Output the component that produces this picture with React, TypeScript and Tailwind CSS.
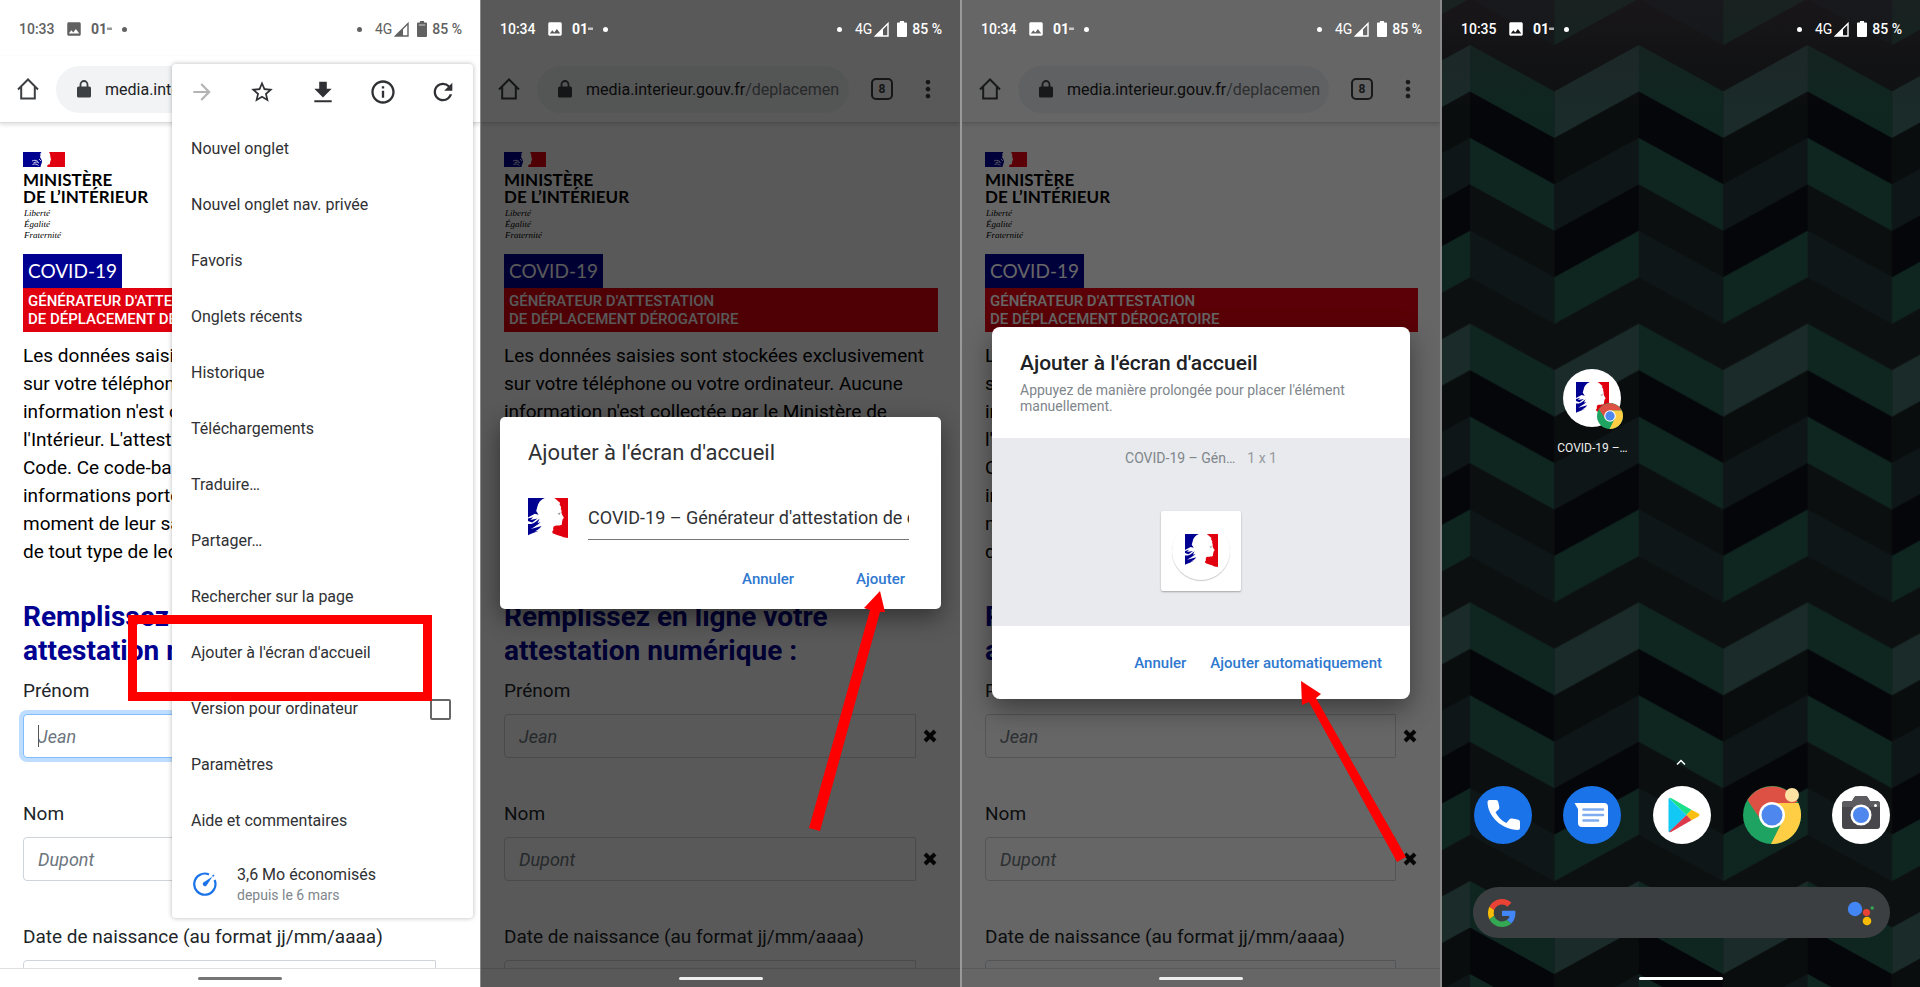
import { useId, type ReactNode } from "react";
import { MdArrowForward, MdImage, MdInfoOutline, MdMoreVert, MdRefresh, MdStarBorder } from "react-icons/md";

/* ---------- shared drawings ---------- */

function Marianne({ className }: { className: string }) {
  return (
    <svg viewBox="0 0 117 117" className={className} aria-hidden="true">
      <g fill="#000091">
        <path d="M0 0H49C37 5 29 14 27 27L24 38L31 49L20 46L0 57Z" />
        <path d="M0 60L15 56L7 64L28 60L12 72L0 67Z" />
        <path d="M0 76L10 76C20 74 26 66 34 61L28 73L37 71C28 79 16 86 8 91L40 82C33 92 26 94 20 98L31 96C20 102 10 104 0 109Z" />
      </g>
      <path
        fill="#e1000f"
        d="M77 0H117V117L104 115C96 111 84 108 72 103L71 97C77 94 72 90 74 86C76 78 90 82 97 79C101 77 98 72 100 69L101 63L105 58C103 52 97 47 98 41C100 36 94 33 97 27L92 18L94 14C88 10 84 4 77 0Z"
      />
      <path d="M86 46L95 42L93 50Z" fill="#9a9aa5" />
    </svg>
  );
}

function MinistryFlag() {
  return (
    <svg viewBox="0 0 42 15" className="h-[15px] w-[42px]" aria-hidden="true">
      <path d="M0 0H18.500C17.500 1 17 2 17.500 3.500L17 5C18 7 19 8 19 9.500C19 11 18 12 17.500 15H0Z" fill="#000091" />
      <path d="M26 0H42V15H24.500C24 14 24 13 25.500 12.500C28 12.500 26.500 10 27.500 9L28 7C27 5.500 27.500 3.500 27 2Z" fill="#e1000f" />
      <path
        d="M9 9C11 8 13 8 15 9.500M10.500 11C12.500 9.500 14.500 10 16 11M9.500 12.500C12 11.500 14 12 15.500 13.500M16 7L18 9"
        stroke="#fff"
        strokeWidth="0.8"
        fill="none"
      />
    </svg>
  );
}

function ChromeLogo({ className }: { className: string }) {
  return (
    <svg viewBox="0 0 58 58" className={className} aria-hidden="true">
      <circle cx="29" cy="29" r="29" fill="#1ea362" />
      <path d="M29 29L4.500 14A29 29 0 0 1 54.500 15.500L52 17H29Z" fill="#dd5144" />
      <path d="M29 29V17H55.400A29 29 0 0 1 28 58L39.500 35Z" fill="#ffce44" />
      <path d="M4.500 14L18.500 35L29 29V17Z" fill="#dd5144" />
      <circle cx="29" cy="29" r="13" fill="#fff" />
      <circle cx="29" cy="29" r="10.500" fill="#4e87ee" />
    </svg>
  );
}

function Arrow({ points }: { points: string }) {
  return (
    <svg viewBox="0 0 480 987" width="480" height="987" className="pointer-events-none absolute top-0 left-0 z-40" aria-hidden="true">
      <polygon points={points} fill="#fe0000" />
    </svg>
  );
}

/* ---------- phone chrome ---------- */

function StatusBar({ time, tone }: { time: string; tone: string }) {
  return (
    <header className={`relative z-20 flex h-14 shrink-0 items-center pt-0.5 pr-[18px] pl-[19px] text-[14px] font-medium ${tone}`}>
      <time className="w-[46px]">{time}</time>
      <MdImage size={18} />
      <span className="ml-2 flex w-[31px] items-center font-bold">
        01
        <svg viewBox="0 0 5 4" className="h-1 w-[5px]" aria-hidden="true">
          <path d="M0 0.500H5V3H0Z" fill="currentColor" opacity="0.65" />
        </svg>
      </span>
      <i className="size-[5px] rounded-full bg-current" />
      <i className="ml-auto size-[5px] rounded-full bg-current" />
      <span className="ml-[13px] font-normal">4G</span>
      <svg viewBox="0 0 15 15" className="ml-0.5 size-[15px]" aria-hidden="true">
        <path d="M14 1.500V14H1.500Z" fill="none" stroke="currentColor" strokeWidth="1.400" />
        <path d="M9 6.500V14H1Z" fill="currentColor" />
      </svg>
      <svg viewBox="0 0 10 16" className="ml-2 h-4 w-2.5" aria-hidden="true">
        <path d="M3 0H7V1.500H9Q10 1.500 10 2.500V15Q10 16 9 16H1Q0 16 0 15V2.500Q0 1.500 1 1.500H3Z" fill="currentColor" />
        <path d="M1.800 4H8.200" stroke="#fff" strokeOpacity="0.55" strokeWidth="1.300" />
      </svg>
      <span className="ml-[5px]">85 %</span>
    </header>
  );
}

function Handle({ tone }: { tone: string }) {
  return <i className={`relative z-20 mx-auto block h-[3px] w-[84px] rounded-full ${tone}`} />;
}

function Toolbar() {
  return (
    <div className="flex h-[67px] shrink-0 items-center border-b border-[#dcdcdc] pr-[18px] pl-[17px] text-[#3c4043] shadow-[0_2px_4px_rgba(0,0,0,0.12)]">
      <button type="button" aria-label="Accueil">
        <svg viewBox="0 0 22 22" className="size-[22px]" fill="none" stroke="currentColor" strokeWidth="2" aria-hidden="true">
          <path d="M1 11.500L11 1.500L21 11.500M4.200 9V20.500H17.800V9" />
        </svg>
      </button>
      <div className="ml-[17px] flex h-[47px] min-w-0 flex-1 items-center overflow-hidden rounded-full bg-[#f1f3f4] pl-[21px]">
        <svg viewBox="0 0 14 18" className="h-[18px] w-3.5 shrink-0" aria-hidden="true">
          <rect y="6.500" width="14" height="11" rx="1.500" fill="currentColor" />
          <path d="M3.500 7V4.500A3.500 3.500 0 0 1 10.500 4.500V7" fill="none" stroke="currentColor" strokeWidth="1.800" />
        </svg>
        <a href="#page" className="ml-[14px] truncate pt-0.5 text-[16px] text-clip text-[#202124]">
          media.interieur.gouv.fr<span className="text-[#70757a]">/deplacemen</span>
        </a>
      </div>
      <button
        type="button"
        className="ml-[22px] flex size-[22px] items-center justify-center rounded-[5px] border-2 border-current text-[12px] leading-none font-bold"
      >
        8
      </button>
      <button type="button" aria-label="Menu" className="ml-[21px]">
        <MdMoreVert size={28} />
      </button>
    </div>
  );
}

function Field({ label, placeholder, focused }: { label: string; placeholder: string; focused?: boolean }) {
  const id = useId();
  return (
    <div className="mb-[42px]">
      <label htmlFor={id} className="block text-[19px] leading-[28px] text-[#212529]">
        {label}
      </label>
      <div className="relative mt-[9px] flex items-center gap-[7px]">
        <input
          id={id}
          type="text"
          placeholder={placeholder}
          className={`h-11 min-w-0 flex-1 rounded-l-[4px] rounded-r-[1px] border bg-white px-3.5 text-[18px] outline-none placeholder:text-[#6c757d] placeholder:italic ${
            focused ? "border-[#80bdff] shadow-[0_0_0_4px_#bfdeff]" : "border-[#ced4da]"
          }`}
        />
        {focused && <i className="absolute top-[11px] left-[15px] h-[22px] w-px bg-[#555]" />}
        <svg viewBox="0 0 14 14" className="mr-px size-3.5" aria-hidden="true">
          <path d="M2 2L12 12M12 2L2 12" stroke="#111" strokeWidth="4" />
        </svg>
      </div>
    </div>
  );
}

const intro = [
  "Les données saisies sont stockées exclusivement",
  "sur votre téléphone ou votre ordinateur. Aucune",
  "information n'est collectée par le Ministère de",
  "l'Intérieur. L'attestation contient aussi un QR",
  "Code. Ce code-barres permet de lire les",
  "informations portées sur ce document au",
  "moment de leur saisie, et cela au moyen",
  "de tout type de lecteur.",
];

function WebPage({ focused }: { focused?: boolean }) {
  return (
    <main className="min-h-0 flex-1 overflow-hidden pt-[29px] pr-[22px] pl-[23px]">
      <MinistryFlag />
      <p className="mt-1 font-['Lato'] text-[17px] leading-[17px] font-bold text-black">
        MINISTÈRE
        <br />
        DE L’INTÉRIEUR
      </p>
      <p className="mt-[3px] pl-px font-['Liberation_Serif'] text-[9px] leading-[11px] text-black italic">
        Liberté
        <br />
        Égalité
        <br />
        Fraternité
      </p>
      <div className="mt-[13px] flex h-[34px] w-fit items-center bg-[#000091] px-[5px] font-['Lato'] text-[19px] text-white">COVID-19</div>
      <p className="bg-[#e1000f] px-[5px] py-1 text-[15px] leading-[18px] font-medium whitespace-nowrap text-white">
        GÉNÉRATEUR D'ATTESTATION
        <br />
        DE DÉPLACEMENT DÉROGATOIRE
      </p>
      <p className="mt-[10px] text-[19px] leading-[28px] whitespace-nowrap text-black">
        {intro.map((line) => (
          <span key={line} className="block">
            {line}
          </span>
        ))}
      </p>
      <h2 className="mt-[34px] mb-[9px] text-[28px] leading-[34px] font-bold whitespace-nowrap text-[#000091]">
        Remplissez en ligne votre
        <br />
        attestation numérique :
      </h2>
      <Field label="Prénom" placeholder="Jean" focused={focused} />
      <Field label="Nom" placeholder="Dupont" />
      <Field label="Date de naissance (au format jj/mm/aaaa)" placeholder="" />
    </main>
  );
}

function BrowserPhone({
  time,
  dimmed,
  focused,
  edge,
  children,
}: {
  time: string;
  dimmed?: boolean;
  focused?: boolean;
  edge: string;
  children: ReactNode;
}) {
  return (
    <section className={`relative flex h-screen min-w-0 flex-col overflow-hidden bg-white ${edge}`}>
      <StatusBar time={time} tone={dimmed ? "text-white" : "text-[#616161]"} />
      <Toolbar />
      <WebPage focused={focused} />
      <footer className="h-[19px] shrink-0 border-t border-[#e0e0e0] pt-2">
        <Handle tone={dimmed ? "bg-[#eeeeee]" : "bg-[#757575]"} />
      </footer>
      {children}
    </section>
  );
}

/* ---------- screen 1: overflow menu ---------- */

const menuBefore = [
  "Nouvel onglet",
  "Nouvel onglet nav. privée",
  "Favoris",
  "Onglets récents",
  "Historique",
  "Téléchargements",
  "Traduire…",
  "Partager…",
  "Rechercher sur la page",
  "Ajouter à l'écran d'accueil",
];
const menuAfter = ["Paramètres", "Aide et commentaires"];

function MenuItem({ label }: { label: string }) {
  return (
    <button type="button" className="flex h-14 w-full items-center px-[19px] text-left">
      {label}
    </button>
  );
}

function MenuIcon({ label, tone, children }: { label: string; tone?: string; children: ReactNode }) {
  return (
    <button type="button" aria-label={label} className={`flex w-7 justify-center ${tone ?? ""}`}>
      {children}
    </button>
  );
}

function OverflowMenu() {
  return (
    <div className="absolute top-16 right-[7px] z-30 w-[301px] rounded-[4px] bg-white text-[16px] text-[#303134] shadow-[0_0_5px_rgba(0,0,0,0.28)]">
      <div className="flex h-[57px] items-center justify-between px-4 pb-0.5">
        <MenuIcon label="Suivant" tone="text-[#b4b4b4]">
          <MdArrowForward size={26} />
        </MenuIcon>
        <MenuIcon label="Ajouter aux favoris">
          <MdStarBorder size={26} />
        </MenuIcon>
        <MenuIcon label="Télécharger">
          <svg viewBox="0 0 24 24" className="size-[26px]" fill="currentColor" aria-hidden="true">
            <path d="M8.500 2.500h7v6.500H20l-8 8-8-8h4.500ZM4 19.500h16v2H4Z" />
          </svg>
        </MenuIcon>
        <MenuIcon label="Informations">
          <MdInfoOutline size={28} />
        </MenuIcon>
        <MenuIcon label="Actualiser">
          <MdRefresh size={28} />
        </MenuIcon>
      </div>
      {menuBefore.map((label) => (
        <MenuItem key={label} label={label} />
      ))}
      <label className="flex h-14 items-center justify-between pr-[22px] pl-[19px]">
        Version pour ordinateur
        <input type="checkbox" className="size-[21px] appearance-none rounded-[2px] border-2 border-[#666] bg-white" />
      </label>
      {menuAfter.map((label) => (
        <MenuItem key={label} label={label} />
      ))}
      <button type="button" className="flex h-[69px] w-full items-center pl-[21px] text-left">
        <svg viewBox="0 0 24 24" className="size-6" aria-hidden="true">
          <path d="M16 2.400A10.600 10.600 0 1 0 21.600 8" fill="none" stroke="#1a73e8" strokeWidth="2.200" />
          <path d="M19.500 4.500L13.600 13.600A2.200 2.200 0 0 1 10.400 10.400Z" fill="#1a73e8" />
          <path d="M19.600 4.400L21 3" stroke="#1a73e8" strokeWidth="1.500" />
        </svg>
        <span className="ml-5 pt-[3px]">
          <span className="block leading-5">3,6 Mo économisés</span>
          <span className="block text-[14px] leading-5 text-[#80868b]">depuis le 6 mars</span>
        </span>
      </button>
    </div>
  );
}

/* ---------- screens 2 and 3: dialogs ---------- */

function Scrim({ shade, children }: { shade: string; children: ReactNode }) {
  return <div className={`absolute inset-0 z-10 flex items-center justify-center pt-14 pb-[18px] ${shade}`}>{children}</div>;
}

function ActionButton({ children }: { children: ReactNode }) {
  return (
    <button type="button" className="text-[15px] font-medium text-[#2f78cf]">
      {children}
    </button>
  );
}

function NameDialog() {
  return (
    <div
      role="dialog"
      aria-label="Ajouter à l'écran d'accueil"
      className="w-[441px] rounded-[5px] bg-white px-7 pt-5 pb-[18px] text-[#303134] shadow-[0_8px_24px_rgba(0,0,0,0.45)]"
    >
      <h3 className="text-[22px] leading-8">Ajouter à l'écran d'accueil</h3>
      <div className="mt-[27px] flex items-center gap-5 pr-1">
        <Marianne className="size-10 shrink-0" />
        <input
          type="text"
          aria-label="Nom du raccourci"
          defaultValue="COVID-19 – Générateur d'attestation de déplacement"
          className="h-11 min-w-0 flex-1 border-b border-[#757575] text-[18px] outline-none"
        />
      </div>
      <div className="mt-[29px] flex h-[22px] items-center justify-end gap-[62px] pr-2">
        <ActionButton>Annuler</ActionButton>
        <ActionButton>Ajouter</ActionButton>
      </div>
    </div>
  );
}

function PlacementDialog() {
  return (
    <div
      role="dialog"
      aria-label="Placement du raccourci"
      className="w-[418px] overflow-hidden rounded-[8px] bg-white shadow-[0_10px_26px_rgba(0,0,0,0.4)]"
    >
      <div className="h-[111px] px-7 pt-5">
        <h3 className="text-[21px] leading-8 font-medium text-[#202124]">Ajouter à l'écran d'accueil</h3>
        <p className="mt-[3px] text-[14px] leading-4 text-[#80868b]">Appuyez de manière prolongée pour placer l'élément manuellement.</p>
      </div>
      <div className="flex h-[188px] flex-col items-center bg-[#e8eaed] pt-2.5 text-[14px] leading-5 text-[#80868b]">
        <p className="flex gap-3">
          <span>COVID-19 – Gén…</span>
          <span className="text-[#95999e]">1 x 1</span>
        </p>
        <div className="mt-[43px] flex size-20 items-center justify-center rounded-[2px] bg-white shadow-[0_1px_2px_rgba(0,0,0,0.3)]">
          <div className="flex size-[58px] items-center justify-center rounded-full bg-white shadow-[0_1px_1px_rgba(0,0,0,0.22)]">
            <Marianne className="size-[33px]" />
          </div>
        </div>
      </div>
      <div className="flex h-[73px] items-center justify-end gap-6 pt-0.5 pr-7">
        <ActionButton>Annuler</ActionButton>
        <ActionButton>Ajouter automatiquement</ActionButton>
      </div>
    </div>
  );
}

/* ---------- screen 4: launcher ---------- */

const downBands = ["#0f2620", "#05060a", "#0f2620", "#0b0f10", "#0e1618", "#0d1011"];
const upBands = ["#1a2b29", "#0a0d0e", "#0e1618", "#05060a", "#0f2620", "#0d1011"];
const STEP = 46.45;
const COL = 84.4;

function Wallpaper() {
  const rows = [-2, -1, 0, 1, 2, 3, 4, 5];
  return (
    <svg className="absolute inset-0 size-full" aria-hidden="true">
      <defs>
        <pattern id="zigzag" width={COL * 2} height={STEP * 6} patternUnits="userSpaceOnUse" patternTransform="translate(28 45)">
          {rows.map((r) => {
            const y = r * STEP;
            const i = (r + 6) % 6;
            return (
              <g key={r}>
                <polygon points={`0,${y} ${COL},${y + STEP} ${COL},${y + 2 * STEP + 1} 0,${y + STEP + 1}`} fill={downBands[i]} />
                <polygon points={`${COL},${y + STEP} ${COL * 2},${y} ${COL * 2},${y + STEP + 1} ${COL},${y + 2 * STEP + 1}`} fill={upBands[i]} />
              </g>
            );
          })}
        </pattern>
        <linearGradient id="topHaze" x1="0" y1="0" x2="0" y2="1">
          <stop offset="0" stopColor="#241c22" stopOpacity="0.5" />
          <stop offset="1" stopColor="#241c22" stopOpacity="0" />
        </linearGradient>
      </defs>
      <rect width="100%" height="100%" fill="url(#zigzag)" />
      <rect width="100%" height="110" fill="url(#topHaze)" />
    </svg>
  );
}

function PhoneIcon() {
  return (
    <svg viewBox="0 0 58 58" className="size-[58px]" aria-hidden="true">
      <circle cx="29" cy="29" r="29" fill="#1a73e8" />
      <path
        d="M15.500 14H22Q24 14 24.300 16L25.300 21Q25.500 22.500 24.500 23.500L21.500 26.200C24 31 27.500 34.500 32.300 37L35.300 33.500Q36.300 32.200 38 32.500L43.500 33.600Q46 34 46 36V42Q46 44 44 44C28 44 13.500 30 13.500 16Q13.500 14 15.500 14Z"
        fill="#fff"
      />
    </svg>
  );
}

function MessagesIcon() {
  return (
    <svg viewBox="0 0 58 58" className="size-[58px]" aria-hidden="true">
      <circle cx="29" cy="29" r="29" fill="#1a73e8" />
      <path d="M11.500 17H41Q45 17 45 21V37Q45 41 41 41H19Q15 41 15 37V23Z" fill="#fff" />
      <path d="M20.500 23.500H40M20.500 29H40M20.500 34.500H35" stroke="#7facee" strokeWidth="2.600" strokeLinecap="round" />
    </svg>
  );
}

function PlayIcon() {
  return (
    <svg viewBox="0 0 58 58" className="size-[58px]" aria-hidden="true">
      <circle cx="29" cy="29" r="29" fill="#fff" />
      <path d="M15.500 13Q15.500 12 16.500 12.400L33.500 29L16.500 46Q15.500 46.500 15.500 45Z" fill="#12c8f5" />
      <path d="M16 12Q17 11.500 18.500 12.300L38.500 23.700L33.500 29Z" fill="#1be08a" />
      <path d="M38.500 23.700L45.500 27.600Q47.500 29 45.500 30.400L38.500 34.300L33.500 29Z" fill="#fbbf12" />
      <path d="M16 46L33.500 29L38.500 34.300L18.500 45.800Q17 46.500 16 46Z" fill="#dc3a4c" />
    </svg>
  );
}

function CameraIcon() {
  return (
    <svg viewBox="0 0 58 58" className="size-[58px]" aria-hidden="true">
      <circle cx="29" cy="29" r="29" fill="#fff" />
      <path d="M13 15H20L22.500 11Q23 10 24.500 10H33.500Q35 10 35.500 11L38 15H45Q48 15 48 18V40Q48 43 45 43H13Q10 43 10 40V18Q10 15 13 15Z" fill="#47474b" />
      <path d="M13 15H20L22.500 11Q23 10 24.500 10H33.500Q35 10 35.500 11L38 15H45Q48 15 48 18V21H10V18Q10 15 13 15Z" fill="#5c5c60" />
      <circle cx="29" cy="29" r="10.500" fill="#fff" />
      <circle cx="29" cy="29" r="8" fill="#4e87ee" />
      <circle cx="43.500" cy="19.500" r="1.500" fill="#fff" />
    </svg>
  );
}

function GoogleG() {
  return (
    <svg viewBox="0 0 48 48" className="size-7" aria-hidden="true">
      <path fill="#EA4335" d="M24 9.500c3.540 0 6.710 1.220 9.210 3.600l6.850-6.850C35.900 2.380 30.470 0 24 0 14.620 0 6.510 5.380 2.560 13.220l7.980 6.190C12.430 13.720 17.740 9.500 24 9.500z" />
      <path fill="#4285F4" d="M46.980 24.550c0-1.570-.15-3.090-.38-4.550H24v9.020h12.940c-.58 2.960-2.260 5.480-4.780 7.180l7.730 6c4.510-4.180 7.090-10.360 7.090-17.650z" />
      <path fill="#FBBC05" d="M10.530 28.590c-.48-1.450-.76-2.990-.76-4.590s.27-3.140.76-4.590l-7.980-6.190C.92 16.460 0 20.120 0 24c0 3.880.92 7.540 2.560 10.780l7.970-6.190z" />
      <path fill="#34A853" d="M24 48c6.480 0 11.930-2.130 15.890-5.810l-7.730-6c-2.150 1.450-4.920 2.300-8.160 2.300-6.260 0-11.570-4.220-13.470-9.910l-7.980 6.190C6.510 42.620 14.620 48 24 48z" />
    </svg>
  );
}

function AssistantIcon() {
  return (
    <svg viewBox="0 0 28 26" className="h-[26px] w-7" aria-hidden="true">
      <circle cx="8" cy="9" r="7.200" fill="#4285f4" />
      <circle cx="19.500" cy="12.500" r="3.600" fill="#ea4335" />
      <circle cx="20" cy="21" r="4.300" fill="#fbbc05" />
      <circle cx="25.200" cy="8" r="1.700" fill="#34a853" />
    </svg>
  );
}

function Launcher() {
  return (
    <section className="relative flex h-screen min-w-0 flex-col overflow-hidden border-l-2 border-[#8a8a8a] bg-[#0a0d0e]">
      <Wallpaper />
      <StatusBar time="10:35" tone="text-white" />
      <div className="relative mt-[313px] grid grid-cols-5 pr-[14px] pl-4">
        <a href="#covid" className="col-start-2 flex flex-col items-center">
          <span className="relative flex size-[58px] items-center justify-center rounded-full bg-white">
            <Marianne className="size-[33px]" />
            <span className="absolute -right-0.5 -bottom-0.5">
              <ChromeLogo className="size-[26px]" />
            </span>
          </span>
          <span className="mt-3 text-[12px] leading-[18px] whitespace-nowrap text-[#eeeeee]">COVID-19 –…</span>
        </a>
      </div>
      <div className="relative mt-auto">
        <svg viewBox="0 0 10 6" className="mx-auto h-1.5 w-2.5" aria-hidden="true">
          <path d="M1 5.500L5 1.500L9 5.500" fill="none" stroke="#fff" strokeWidth="1.500" />
        </svg>
        <nav className="mt-[21px] grid grid-cols-5 justify-items-center pr-[14px] pl-4">
          <button type="button" aria-label="Téléphone">
            <PhoneIcon />
          </button>
          <button type="button" aria-label="Messages">
            <MessagesIcon />
          </button>
          <button type="button" aria-label="Play Store">
            <PlayIcon />
          </button>
          <button type="button" aria-label="Chrome" className="relative">
            <ChromeLogo className="size-[58px]" />
            <i className="absolute top-0.5 right-0.5 size-3.5 rounded-full bg-[#fde2a4]" />
          </button>
          <button type="button" aria-label="Appareil photo">
            <CameraIcon />
          </button>
        </nav>
        <div className="mt-[43px] mr-[30px] mb-[39px] ml-[31px] flex h-[51px] items-center rounded-full bg-[#3c3f42] px-[15px]">
          <GoogleG />
          <input type="text" aria-label="Recherche" className="min-w-0 flex-1 bg-transparent px-4 text-white outline-none" />
          <AssistantIcon />
        </div>
      </div>
      <div className="h-[10px] shrink-0">
        <Handle tone="bg-white" />
      </div>
    </section>
  );
}

export default function App() {
  return (
    <div className="grid grid-cols-4 overflow-hidden font-['Roboto',sans-serif]">
      <BrowserPhone time="10:33" focused edge="">
        <OverflowMenu />
        <div className="pointer-events-none absolute top-[615px] right-12 z-40 h-[86px] w-[304px] border-[9px] border-[#fe0000]" />
      </BrowserPhone>
      <BrowserPhone time="10:34" dimmed edge="border-l border-[#8a8a8a]">
        <Scrim shade="bg-black/65">
          <NameDialog />
        </Scrim>
        <Arrow points="399,591 383,608 389,610 328,828 339,831 399,612 404,612" />
      </BrowserPhone>
      <BrowserPhone time="10:34" dimmed edge="border-l-2 border-[#9a9a9a]">
        <Scrim shade="bg-black/60">
          <PlacementDialog />
        </Scrim>
        <Arrow points="339,681 340,705 347,702 435,862 444,857 354,698 359,694" />
      </BrowserPhone>
      <Launcher />
    </div>
  );
}
